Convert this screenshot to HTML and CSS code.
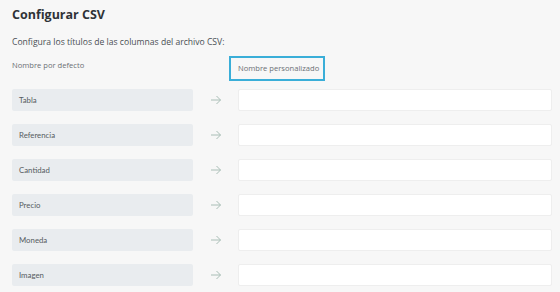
FILE: index.html
```html
<!DOCTYPE html>
<html lang="es">
<head>
<meta charset="utf-8">
<link rel="stylesheet" href="styles.css">
</head>
<body>
<div class="page">
  <h1 class="title">Configurar CSV</h1>
  <p class="intro">Configura los títulos de las columnas del archivo CSV:</p>
  <div class="grid">
    <div class="head-default">Nombre por defecto</div>
    <div></div>
    <div class="head-custom-wrap"><span class="head-custom">Nombre personalizado</span></div>

    <div class="label">Tabla</div>
    <div class="arrow"><svg width="12" height="10" viewBox="0 0 12 10"><path d="M1 5H10.5M6.5 1L10.5 5L6.5 9" fill="none" stroke="#a9beb6" stroke-width="1"/></svg></div>
    <div class="field"></div>

    <div class="label">Referencia</div>
    <div class="arrow"><svg width="12" height="10" viewBox="0 0 12 10"><path d="M1 5H10.5M6.5 1L10.5 5L6.5 9" fill="none" stroke="#a9beb6" stroke-width="1"/></svg></div>
    <div class="field"></div>

    <div class="label">Cantidad</div>
    <div class="arrow"><svg width="12" height="10" viewBox="0 0 12 10"><path d="M1 5H10.5M6.5 1L10.5 5L6.5 9" fill="none" stroke="#a9beb6" stroke-width="1"/></svg></div>
    <div class="field"></div>

    <div class="label">Precio</div>
    <div class="arrow"><svg width="12" height="10" viewBox="0 0 12 10"><path d="M1 5H10.5M6.5 1L10.5 5L6.5 9" fill="none" stroke="#a9beb6" stroke-width="1"/></svg></div>
    <div class="field"></div>

    <div class="label">Moneda</div>
    <div class="arrow"><svg width="12" height="10" viewBox="0 0 12 10"><path d="M1 5H10.5M6.5 1L10.5 5L6.5 9" fill="none" stroke="#a9beb6" stroke-width="1"/></svg></div>
    <div class="field"></div>

    <div class="label">Imagen</div>
    <div class="arrow"><svg width="12" height="10" viewBox="0 0 12 10"><path d="M1 5H10.5M6.5 1L10.5 5L6.5 9" fill="none" stroke="#a9beb6" stroke-width="1"/></svg></div>
    <div class="field"></div>
  </div>
</div>
</body>
</html>
```
FILE: styles.css
```css
html, body {
  margin: 0;
  padding: 0;
  background: #f7f7f7;
}
.page {
  padding: 7px 8px 0 12px;
  font-family: "Open Sans", "DejaVu Sans", sans-serif;
}
.title {
  margin: 0;
  font-size: 12.5px;
  line-height: 16px;
  font-weight: 700;
  color: #2f3337;
}
.intro {
  margin: 13px 0 0 0;
  font-size: 8.6px;
  line-height: 12px;
  color: #4a4f54;
}
.grid {
  margin-top: 6px;
  display: grid;
  grid-template-columns: 181px 45px 1fr;
  grid-template-rows: 22px;
  grid-auto-rows: 22px;
  row-gap: 13px;
}
.grid > .head-default,
.grid > .head-custom-wrap {
  height: 25px;
}
.head-default {
  font-size: 7.6px;
  line-height: 22px;
  color: #6b7075;
}
.head-custom-wrap {
  margin-left: -9px;
}
.head-custom {
  display: inline-block;
  box-sizing: border-box;
  width: 96px;
  height: 25px;
  border: 2px solid #3aaed8;
  padding-left: 7px;
  font-size: 7.6px;
  line-height: 20px;
  color: #6b7075;
}
.label {
  background: #e9ecef;
  border-radius: 2px;
  padding-left: 7px;
  font-family: Lato, "Open Sans", sans-serif;
  font-size: 7.8px;
  line-height: 22px;
  color: #555b60;
}
.arrow {
  display: flex;
  align-items: center;
  justify-content: center;
}
.field {
  background: #ffffff;
  border: 1px solid #eeeeee;
  border-radius: 2px;
}
```
